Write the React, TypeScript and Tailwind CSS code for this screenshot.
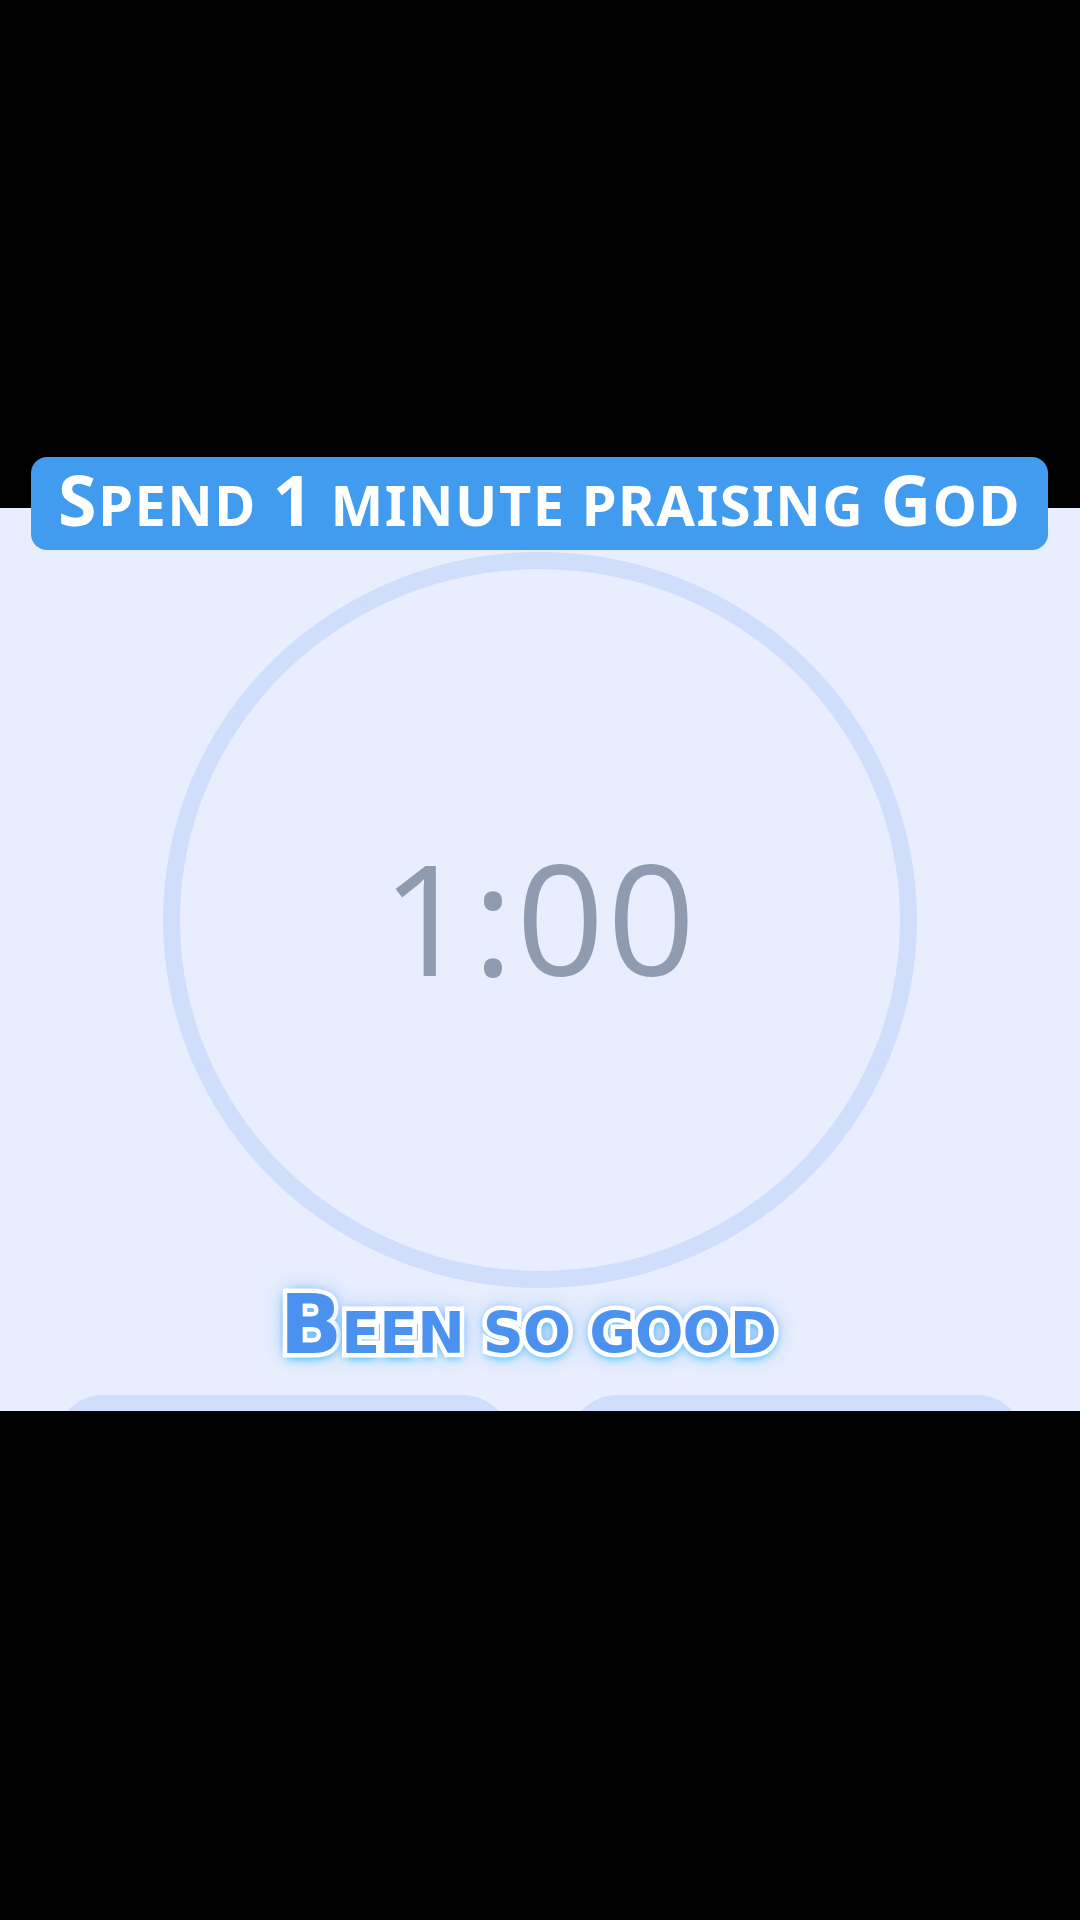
import React from "react";

function Caption() {
  const text = (
    <>
      <span className="text-[82px]">B</span>
      <span className="text-[57px] uppercase">een so good</span>
    </>
  );
  return (
    <div className="grid">
      <span className="[grid-area:1/1] font-['DejaVu_Sans',sans-serif] font-bold leading-none tracking-[-1px] text-white [-webkit-text-stroke:9px_#ffffff] [text-shadow:0_0_10px_#3e9dff,0_5px_8px_#3fd0ff,0_0_22px_#7fb4ff]">
        {text}
      </span>
      <span className="[grid-area:1/1] font-['DejaVu_Sans',sans-serif] font-bold leading-none tracking-[-1px] text-[#4b91ef]">
        {text}
      </span>
    </div>
  );
}

export default function App() {
  return (
    <div className="relative w-[1080px] h-[1920px] bg-black overflow-hidden">
      <div className="h-[508px] bg-black" />
      <section className="relative h-[903px] bg-[#e8eefd] overflow-hidden flex flex-col items-center">
        <div className="shrink-0 mt-[44px] w-[754px] h-[736px] rounded-[50%] border-[17px] border-[#cfdefb] flex items-center justify-center">
          <span className="font-['Open_Sans',sans-serif] font-normal text-[154px] leading-none text-[#8f9bb0] tracking-[3px] -mt-[8px]">
            1:00
          </span>
        </div>
        <div className="shrink-0 mt-[107px] w-full flex gap-[58px] px-[55px]">
          <div className="flex-1 h-[60px] rounded-t-[48px] bg-[#cfdefb]" />
          <div className="flex-1 h-[60px] rounded-t-[48px] bg-[#cfdefb]" />
        </div>
      </section>

      <div className="absolute left-[31px] top-[457px] w-[1017px] h-[93px] rounded-[16px] bg-[#419bee] flex items-center justify-center">
        <span className="font-['Noto_Sans',sans-serif] font-bold leading-none text-white tracking-[1.5px] whitespace-nowrap -mt-[10px]">
          <span className="text-[70px]">S</span>
          <span className="text-[56px] uppercase">pend </span>
          <span className="text-[70px]">1</span>
          <span className="text-[56px] uppercase"> minute praising </span>
          <span className="text-[70px]">G</span>
          <span className="text-[56px] uppercase">od</span>
        </span>
      </div>

      <div className="absolute left-0 right-0 top-[1284px] flex justify-center pr-[24px]">
        <Caption />
      </div>
    </div>
  );
}
